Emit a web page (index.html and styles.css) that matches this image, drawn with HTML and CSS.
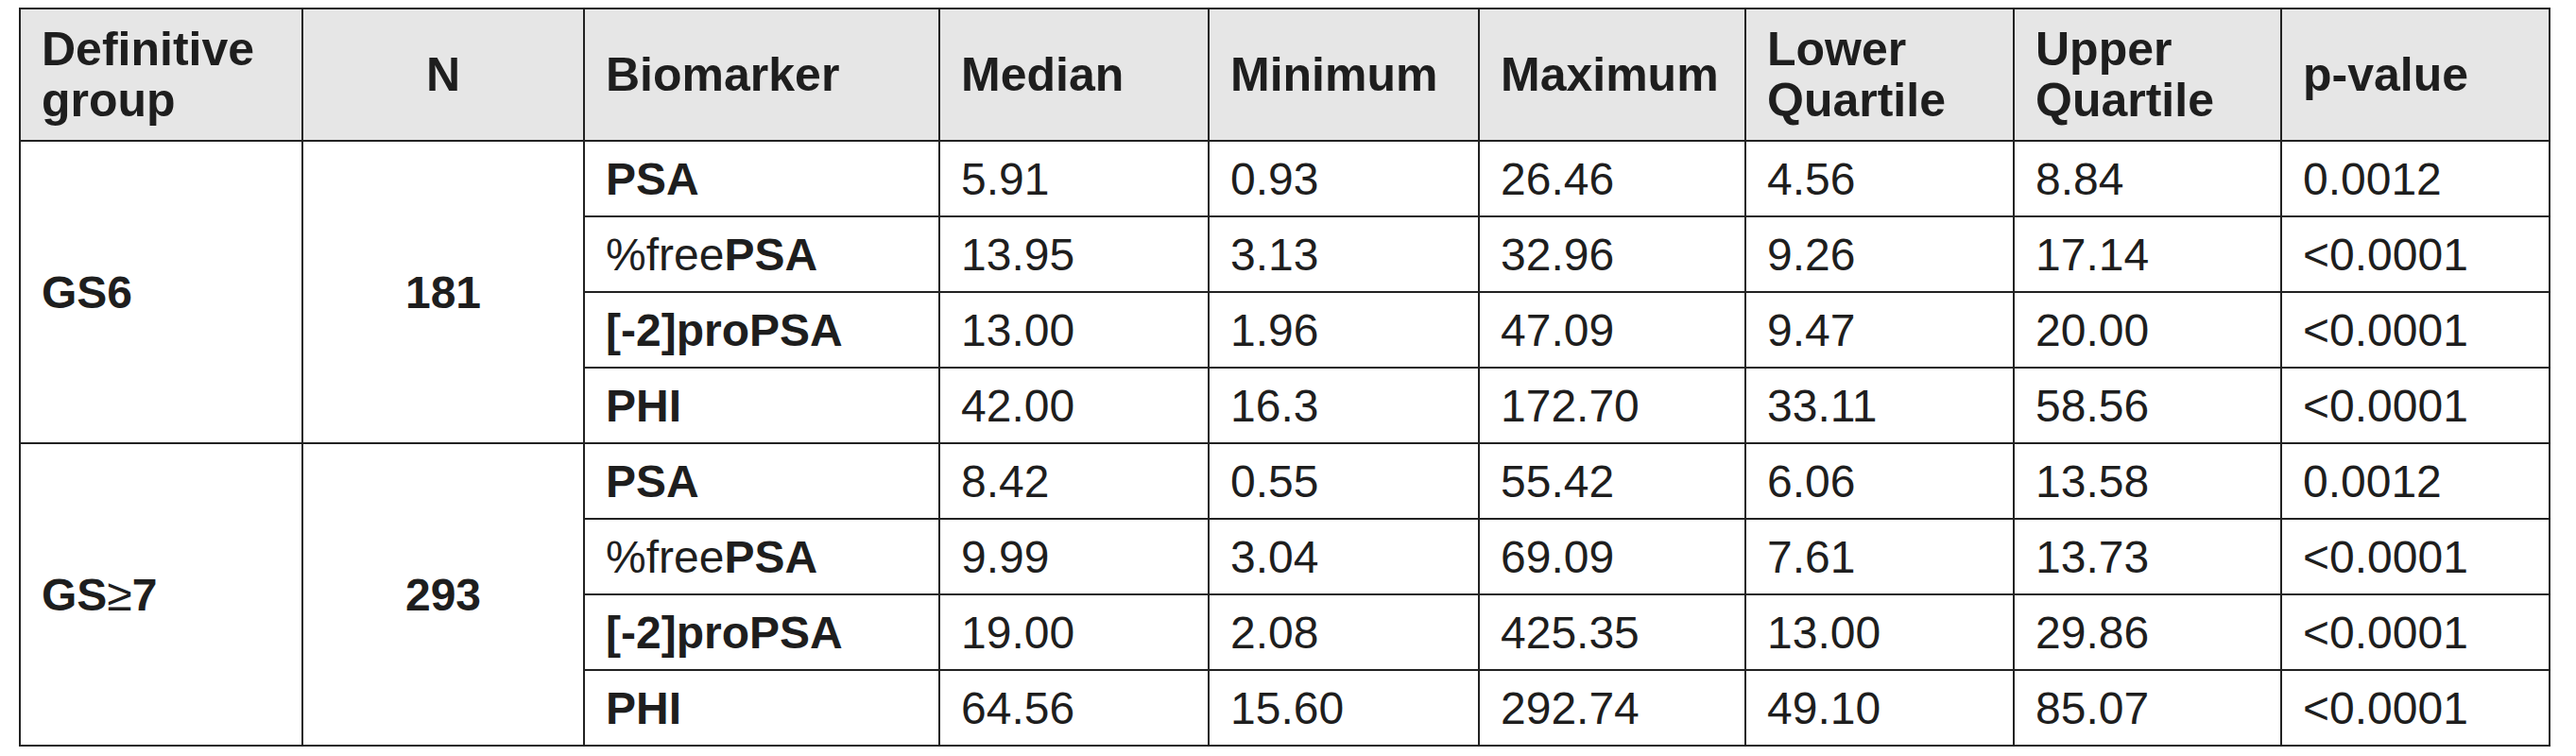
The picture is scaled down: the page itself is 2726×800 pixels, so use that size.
FILE: index.html
```html
<!DOCTYPE html>
<html lang="en">
<head>
<meta charset="utf-8">
<title>Biomarkers by definitive group</title>
<link rel="stylesheet" href="styles.css">
</head>
<body>
<table class="stats">
  <thead>
    <tr class="head">
      <th class="c1">Definitive<br>group</th>
      <th class="c2 center">N</th>
      <th class="c3">Biomarker</th>
      <th class="c4">Median</th>
      <th class="c5">Minimum</th>
      <th class="c6">Maximum</th>
      <th class="c7">Lower<br>Quartile</th>
      <th class="c8">Upper<br>Quartile</th>
      <th class="c9">p-value</th>
    </tr>
  </thead>
  <tbody>
    <tr>
      <td class="grp" rowspan="4">GS6</td>
      <td class="n" rowspan="4">181</td>
      <td class="bm">PSA</td>
      <td>5.91</td><td>0.93</td><td>26.46</td><td>4.56</td><td>8.84</td><td>0.0012</td>
    </tr>
    <tr>
      <td class="bm"><span class="reg">%free</span>PSA</td>
      <td>13.95</td><td>3.13</td><td>32.96</td><td>9.26</td><td>17.14</td><td>&lt;0.0001</td>
    </tr>
    <tr>
      <td class="bm">[-2]proPSA</td>
      <td>13.00</td><td>1.96</td><td>47.09</td><td>9.47</td><td>20.00</td><td>&lt;0.0001</td>
    </tr>
    <tr>
      <td class="bm">PHI</td>
      <td>42.00</td><td>16.3</td><td>172.70</td><td>33.11</td><td>58.56</td><td>&lt;0.0001</td>
    </tr>
    <tr>
      <td class="grp" rowspan="4">GS<span class="ge">≥</span>7</td>
      <td class="n" rowspan="4">293</td>
      <td class="bm">PSA</td>
      <td>8.42</td><td>0.55</td><td>55.42</td><td>6.06</td><td>13.58</td><td>0.0012</td>
    </tr>
    <tr>
      <td class="bm"><span class="reg">%free</span>PSA</td>
      <td>9.99</td><td>3.04</td><td>69.09</td><td>7.61</td><td>13.73</td><td>&lt;0.0001</td>
    </tr>
    <tr>
      <td class="bm">[-2]proPSA</td>
      <td>19.00</td><td>2.08</td><td>425.35</td><td>13.00</td><td>29.86</td><td>&lt;0.0001</td>
    </tr>
    <tr>
      <td class="bm">PHI</td>
      <td>64.56</td><td>15.60</td><td>292.74</td><td>49.10</td><td>85.07</td><td>&lt;0.0001</td>
    </tr>
  </tbody>
</table>
</body>
</html>
```

FILE: styles.css
```css
html, body {
  margin: 0;
  padding: 0;
  background: #ffffff;
}

body {
  padding: 8px 0 0 20px;
  font-family: "Liberation Sans", Arial, Helvetica, sans-serif;
  color: #1e1e1e;
}

.stats {
  border-collapse: separate;
  border-spacing: 0;
  table-layout: fixed;
  width: 2679px;
  border-top: 2px solid #222222;
  border-left: 2px solid #222222;
  font-size: 48px;
  line-height: 51px;
}

.stats th,
.stats td {
  box-sizing: border-box;
  border-right: 2px solid #222222;
  border-bottom: 2px solid #222222;
  padding: 0 10px 0 22px;
  text-align: left;
  vertical-align: middle;
  white-space: nowrap;
}

.stats th {
  background: #e6e6e6;
  font-weight: bold;
  font-size: 50px;
  line-height: 54px;
}

.stats .head {
  height: 140px;
}

.stats tbody tr {
  height: 80px;
}

.stats td {
  font-weight: normal;
}

.c1 { width: 299px; }
.c2 { width: 298px; }
.c3 { width: 376px; }
.c4 { width: 285px; }
.c5 { width: 286px; }
.c6 { width: 282px; }
.c7 { width: 284px; }
.c8 { width: 283px; }
.c9 { width: 284px; }

.stats .center {
  text-align: center;
  padding-left: 10px;
}

.stats .grp {
  font-weight: bold;
}

.stats .n {
  font-weight: bold;
  text-align: center;
  padding-left: 10px;
}

.stats .bm {
  font-weight: bold;
}

.reg {
  font-weight: normal;
}

.ge {
  font-weight: normal;
}
```
